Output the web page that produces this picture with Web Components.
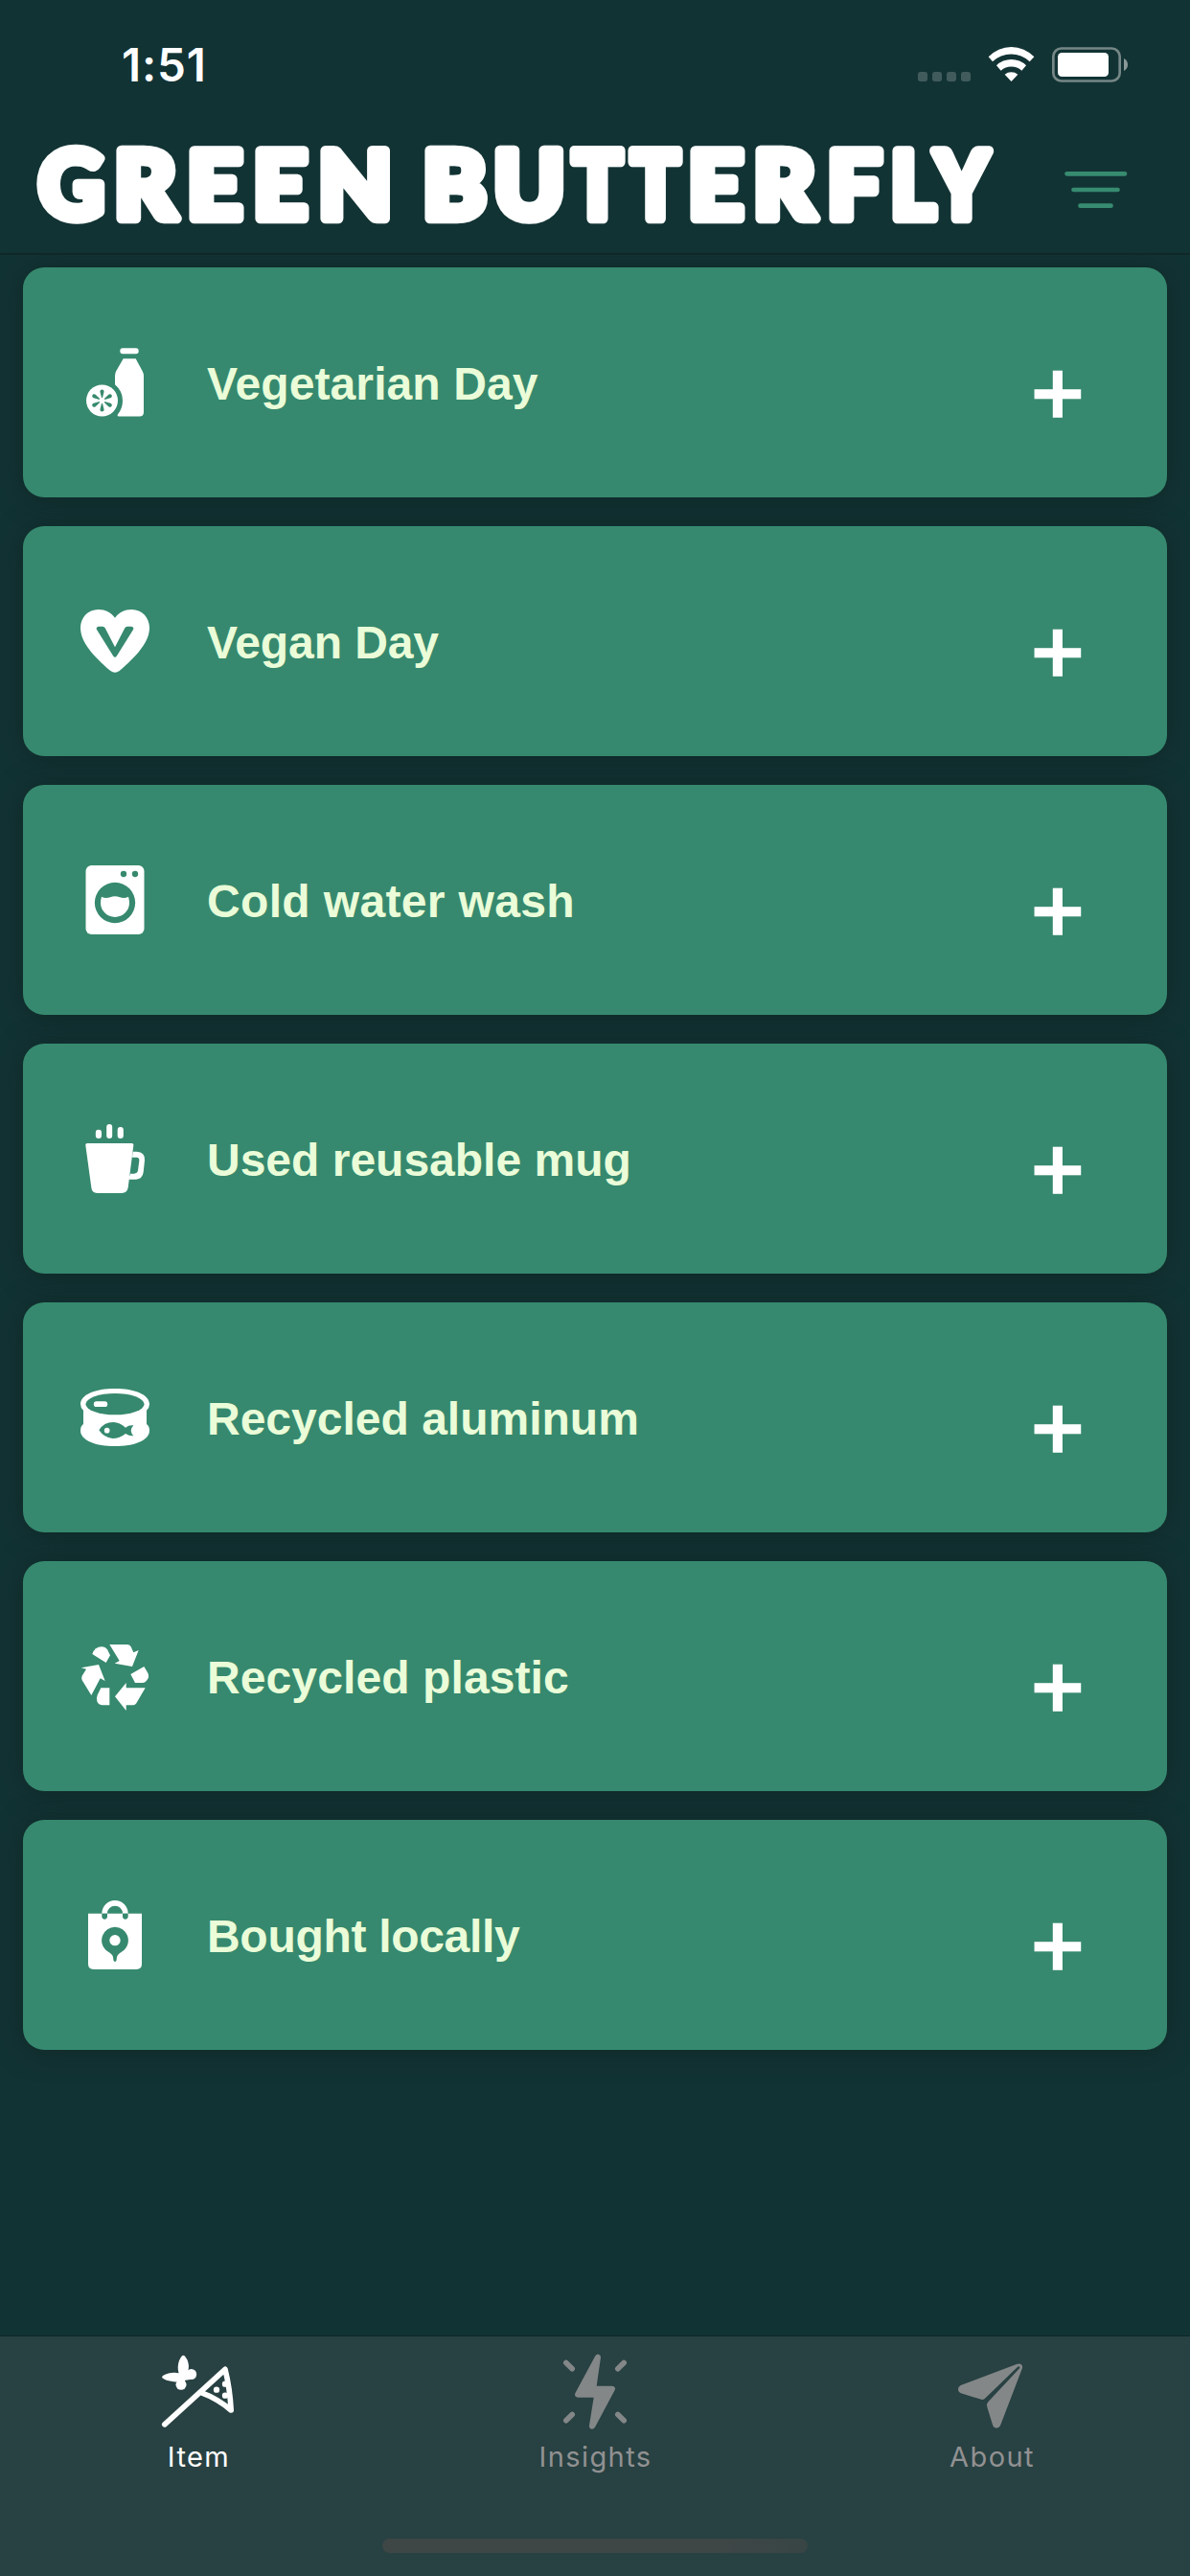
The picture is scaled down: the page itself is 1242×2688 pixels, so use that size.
<!DOCTYPE html>
<html lang="en">
<head>
<meta charset="utf-8">
<title>Green Butterfly</title>
<style>
html, body { margin: 0; width: 1242px; height: 2688px; overflow: hidden; background: #123334; }
</style>
</head>
<body>
<butterfly-app></butterfly-app>
<script>
const ICONS = {
  bottle: ['72 69 216 216', `<rect x="196" y="70" width="58" height="17.5" rx="8"/>
    <path d="M206 103H245L266 142Q270 149 270 158V270Q270 283.500 257 283.500H192Q185 282 190 275Q204 258 204 234Q204 205 180 184V156Q180 148 184 141Z"/>
    <circle cx="139.500" cy="234" r="49.500"/>
    <g class="cut" transform="translate(139.500 234)">${[0,60,120,180,240,300].map(a=>`<path transform="rotate(${a})" d="M-1.500 -9L-6 -27A6.200 6.200 0 1 1 6 -27L1.500 -9Z"/>`).join('')}</g>`],
  heart: ['72 879 216 216', `<path d="M180 914C168 898 150 888 128 888C95 888 72 914 72 945C72 990 112 1034 166 1080Q180 1091 194 1080C248 1034 288 990 288 945C288 914 265 888 232 888C210 888 192 898 180 914Z"/>
    <path class="cut" d="M129 941H141Q147 942 149 946L180 1006L211 946Q213 942 219 941H231Q241 943 237 951L186 1033Q180 1042 174 1033L123 951Q119 943 129 941Z"/>`],
  washer: ['72 69 216 216', `<rect x="88.500" y="69" width="183" height="216" rx="18"/>
    <g class="cut"><circle cx="207" cy="96" r="9.500"/><circle cx="243" cy="96" r="9.500"/><circle cx="180" cy="186" r="63.500"/></g>
    <path d="M138 167Q150 174 165 169Q180 163 195 169Q210 174 222 167Q225 177 225 186A45 45 0 0 1 135 186Q135 177 138 167Z"/>`],
  mug: ['72 879 216 216', `<rect x="119.500" y="896" width="18.500" height="28" rx="9"/><rect x="153.500" y="879" width="18" height="45" rx="9"/><rect x="188" y="888" width="18.500" height="36" rx="9"/>
    <path d="M94 939H232Q239 939 238 946L221 1078Q218 1095 201 1095H124Q108 1095 106 1078L88 946Q87 939 94 939Z"/>
    <path fill-rule="evenodd" d="M236 965H248Q275 967 273 992L269 1030Q266 1051 246 1052H222L228 1034H240Q250 1034 252 1024L256 993Q257 984 248 983H234Z"/>`],
  can: ['72 69 216 216', `<path d="M72 136C72 105 120 87 180 87S288 105 288 136Q288 147 279 155V198Q288 205 288 218C288 249 240 267 180 267S72 249 72 218Q72 205 81 198V155Q72 147 72 136Z"/>
    <ellipse class="cut" cx="180" cy="135.500" rx="91.500" ry="33.500"/><rect x="113.500" y="126.500" width="43" height="17.500" rx="8.500"/>
    <path class="cut" d="M130 217Q145 192 175 192Q195 193 213 209Q225 200 238 202Q231 210 230 218Q231 228 238 235Q225 236 213 228Q195 243 172 243Q145 240 130 217Z"/><circle cx="155" cy="218" r="8.500"/>`],
  recycle: ['72 879 216 216', `<path d="M163 888H218Q226 888 230 895L238 913L254 906L234 957L179 947L194 939Z"/>
    <path d="M109 918Q117 895 138 895Q150 895 156 904L165 922L152 945Z"/>
    <path d="M74 961L129 951L149 1002L134 994L106 1047L77 1000Q74 992 77 986L90 965Z"/>
    <path d="M229 981L271 957L283 977Q288 988 282 997Q276 1008 266 1008H243Z"/>
    <path d="M180 1051L215 1008V1024H275L247 1072Q243 1078 237 1078H215V1095Z"/>
    <path d="M163 1024V1078H142Q128 1078 124 1066Q121 1056 125 1046L136 1024Z"/>`],
  bag: ['72 69 216 216', `<path d="M96 110H264V268Q264 285 247 285H113Q96 285 96 268Z"/>
    <path d="M147.500 110A32.500 32.500 0 0 1 212.500 110" fill="none" stroke="#fff" stroke-width="17"/>
    <g class="cut"><path d="M139 110H156V119.500A8.500 8.500 0 0 1 139 119.500ZM204 110H221V119.500A8.500 8.500 0 0 1 204 119.500Z"/>
    <path d="M180 152A42 42 0 0 1 208 225Q189 237 187 243Q185 250 184.500 257Q180 265 175.500 257Q175 250 173 243Q171 237 152 225A42 42 0 0 1 180 152Z"/></g><circle cx="180" cy="194" r="17"/>`],
  net: ['84 79 234 234', `<g fill="none" stroke="currentColor" stroke-width="17" stroke-linecap="round" stroke-linejoin="round"><path d="M95.500 300.500L285 128Q300 188 303.500 256Q262 220 208 200"/></g>
    <circle cx="258" cy="192" r="9.500"/><circle cx="285" cy="174" r="9.500"/><circle cx="285" cy="210" r="9.500"/>
    <path d="M149 158C132 138 134 104 150 86Q154 82 158 86C171 101 175 122 166 140L156 158Z"/>
    <path d="M150 162Q138 169 124 167C106 165 94 161 88 155Q85 150 91 147C108 138 136 134 150 145Z"/>
    <circle cx="179" cy="143.500" r="16.500"/><circle cx="147" cy="176" r="16.500"/><path d="M148 140L166 136L176 160L160 162L158 166L163 175L136 166Z"/>`],
  bolt: ['126 79 234 234', `<path d="M261 90L248 180H296Q310 182 305 193L243 309Q239 315 233 315Q224 314 225 304L239 216H189Q177 214 181 203L244 86Q248 80 254 81Q261 82 261 90Z"/>
    <path fill="none" stroke="currentColor" stroke-width="17" stroke-linecap="round" d="M152.500 107.500L171.500 126.500M333.500 107.500L314.500 126.500M152.500 288.500L171.500 269.500M333.500 288.500L314.500 269.500"/>`],
  plane: ['108 79 234 234', `<path d="M128 178L303 112Q309 110 315 111Q323 114 321 124L253 302Q249 312 240 312Q231 312 228 302L210 243L195 223L129 203Q120 199 120 190Q120 182 128 178Z"/>
    <path class="cut" d="M308 119L313 120L313 124L214 230Q208 236 211 246L192 223Q199 224 204 219Z"/>`]
};

class AppIcon extends HTMLElement {
  constructor() {
    super();
    const [box, art] = ICONS[this.getAttribute('name')];
    this.attachShadow({ mode: 'open' }).innerHTML = `<style>
      :host { display: block; flex: none; width: 72px; height: 72px; }
      svg { display: block; width: 100%; height: 100%; overflow: visible; fill: currentColor; }
      .cut { fill: var(--surface); }
    </style><svg viewBox="${box}" aria-hidden="true">${art}</svg>`;
  }
}

class StatusBar extends HTMLElement {
  constructor() {
    super();
    this.attachShadow({ mode: 'open' }).innerHTML = `<style>
      :host { display: flex; justify-content: space-between; align-items: center; box-sizing: border-box; height: 135px; padding: 0 65px 0 127px; color: #fff; }
      time { font: 600 47.500px/58px Inter, sans-serif; letter-spacing: .9px; }
      svg { display: block; }
    </style>
    <time>1:51</time>
    <svg width="219" height="37" viewBox="174 87 657 111" fill="#fff">
      <g fill="#415b5c"><rect x="174" y="165" width="30" height="30" rx="8"/><rect x="219" y="165" width="30" height="30" rx="8"/><rect x="264" y="165" width="30" height="30" rx="8"/><rect x="309" y="165" width="30" height="30" rx="8"/></g>
      <path d="M395 118A98 98 0 0 1 538 118L524 133A84 84 0 0 0 408 133ZM420 145A66 66 0 0 1 513 145L499 161A49 49 0 0 0 434 161ZM446 173A32 32 0 0 1 487 173L466.500 195Z"/>
      <rect x="598" y="91.500" width="208" height="102" rx="25" fill="none" stroke="#758786" stroke-width="8"/>
      <rect x="612" y="105" width="159" height="75" rx="13"/>
      <path d="M819 123Q831 130 831 142.500T819 162Z" fill="#8b9999"/>
    </svg>`;
  }
}

/* Left and right edge of every wordmark letter; each glyph is scaled to its slot. */
const WORDMARK = [
  ['G', 38, 110], ['R', 121, 190], ['E', 197, 255], ['E', 266, 323], ['N', 334, 407], [' ', 410, 440],
  ['B', 443, 509], ['U', 516, 589], ['T', 594, 653], ['T', 655, 713], ['E', 720, 778], ['R', 788, 857],
  ['F', 865, 923], ['L', 931, 980], ['Y', 970, 1038]
];

class AppHeader extends HTMLElement {
  constructor() {
    super();
    const stroke = 10.5;
    const pen = document.createElement('canvas').getContext('2d');
    pen.font = '900 97.500px Lato';
    const letters = WORDMARK.map(([char, from, to]) => {
      if (char === ' ') return `<tspan x="${from}"> </tspan>`;
      const m = pen.measureText(char);
      const ink = m.actualBoundingBoxLeft + m.actualBoundingBoxRight;
      const k = (to - from) / (ink + stroke);
      const x = from + (m.actualBoundingBoxLeft + stroke / 2) * k;
      return `<tspan x="${x.toFixed(2)}" textLength="${(m.width * k).toFixed(2)}" lengthAdjust="spacingAndGlyphs">${char}</tspan>`;
    }).join('');
    this.attachShadow({ mode: 'open' }).innerHTML = `<style>
      :host { display: flex; justify-content: space-between; align-items: flex-start; box-sizing: border-box; height: 131px; padding: 0 65px 0 30px; border-bottom: 2px solid #102728; }
      .word { display: block; width: 1020px; height: 120px; overflow: visible; }
      text { font: 900 97.500px Lato, sans-serif; fill: #fff; stroke: #fff; stroke-width: ${stroke}px; stroke-linejoin: round; }
      .filter { display: block; margin-top: 43px; }
    </style>
    <svg class="word" viewBox="30 135 1020 120"><text y="227.500">${letters}</text></svg>
    <svg class="filter" width="66" height="40" viewBox="1111 178 66 40" stroke="#378b70" stroke-width="4.700" stroke-linecap="round"><path d="M1113.500 181.300H1174M1120.500 198H1166.500M1127.500 214.700H1159.500"/></svg>`;
  }
}

class HabitCard extends HTMLElement {
  constructor() {
    super();
    this.attachShadow({ mode: 'open' }).innerHTML = `<style>
      :host { --surface: #36896e; display: flex; align-items: center; box-sizing: border-box; height: 240px; padding: 0 86px 0 60px; border-radius: 22px; background: var(--surface); color: #fff; box-shadow: 0 2px 28px rgba(18, 30, 28, .5); }
      .label { flex: 1; margin-left: 60px; padding-top: 4px; font: 700 48px/60px "Liberation Sans", sans-serif; letter-spacing: var(--track, 0); color: #eafcd8; white-space: nowrap; }
      .add { font: 400 93px/100px "Liberation Sans", sans-serif; -webkit-text-stroke: 3.400px #fff; width: 56px; text-align: center; padding-top: 22px; }
    </style>
    <app-icon name="${this.getAttribute('icon')}"></app-icon><span class="label"><slot></slot></span><span class="add">+</span>`;
  }
}

class TabItem extends HTMLElement {
  constructor() {
    super();
    this.attachShadow({ mode: 'open' }).innerHTML = `<style>
      :host { --surface: #284142; display: flex; flex-direction: column; align-items: center; flex: 1; padding-top: 18px; color: #838788; }
      :host([active]) { color: #fff; }
      app-icon { width: 78px; height: 78px; }
      span { margin-top: 12px; font: 400 29px/36px Inter, sans-serif; letter-spacing: 1.400px; margin-right: -1px; color: #919192; }
      :host([active]) span { color: #fff; }
    </style>
    <app-icon name="${this.getAttribute('icon')}"></app-icon><span><slot></slot></span>`;
  }
}

class TabBar extends HTMLElement {
  constructor() {
    super();
    this.attachShadow({ mode: 'open' }).innerHTML = `<style>
      :host { display: flex; flex-direction: column; align-items: center; justify-content: space-between; box-sizing: border-box; height: 251px; padding-bottom: 24px; border-top: 1px solid #0e2829; background: #284142; }
      nav { display: flex; width: 100%; }
      .home { width: 444px; height: 15px; border-radius: 8px; background: linear-gradient(90deg, #3e4646 80%, #384545); }
    </style>
    <nav><slot></slot></nav><div class="home"></div>`;
  }
}

class ButterflyApp extends HTMLElement {
  constructor() {
    super();
    this.attachShadow({ mode: 'open' }).innerHTML = `<style>
      :host { display: flex; flex-direction: column; width: 1242px; height: 2688px; background: #123334; }
      main { flex: 1; min-height: 0; overflow: hidden; display: flex; flex-direction: column; gap: 30px; padding: 13px 24px 0; }
      habit-card, status-bar, app-header, tab-bar { flex: none; }
    </style>
    <status-bar></status-bar>
    <app-header></app-header>
    <main>
      <habit-card icon="bottle" style="--track:.1px">Vegetarian Day</habit-card>
      <habit-card icon="heart" style="--track:-.1px">Vegan Day</habit-card>
      <habit-card icon="washer" style="--track:.35px">Cold water wash</habit-card>
      <habit-card icon="mug">Used reusable mug</habit-card>
      <habit-card icon="can">Recycled aluminum</habit-card>
      <habit-card icon="recycle" style="--track:.1px">Recycled plastic</habit-card>
      <habit-card icon="bag" style="--track:-.3px">Bought locally</habit-card>
    </main>
    <tab-bar>
      <tab-item icon="net" active>Item</tab-item>
      <tab-item icon="bolt">Insights</tab-item>
      <tab-item icon="plane">About</tab-item>
    </tab-bar>`;
  }
}

customElements.define('app-icon', AppIcon);
customElements.define('status-bar', StatusBar);
customElements.define('app-header', AppHeader);
customElements.define('habit-card', HabitCard);
customElements.define('tab-item', TabItem);
customElements.define('tab-bar', TabBar);
customElements.define('butterfly-app', ButterflyApp);
</script>
</body>
</html>
